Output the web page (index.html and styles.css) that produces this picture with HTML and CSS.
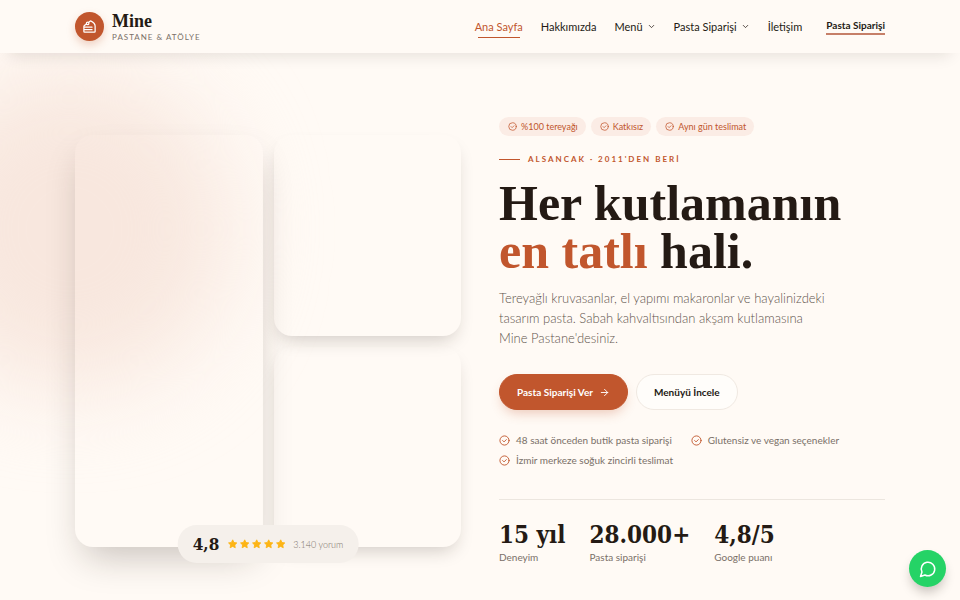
FILE: index.html
```html
<!DOCTYPE html>
<html lang="tr">
<head>
    <meta charset="utf-8">
    <meta name="viewport" content="width=device-width, initial-scale=1.0">
    <title>Mine Pastane &amp; Atölye</title>
    <link rel="stylesheet" href="styles.css">
</head>
<body>
    <svg class="sprite" aria-hidden="true">
        <symbol id="check" viewBox="0 0 24 24"><circle cx="12" cy="12" r="10"/><path d="m8 12 3 3 5-5"/></symbol>
        <symbol id="chevron" viewBox="0 0 24 24"><path d="m6 9 6 6 6-6"/></symbol>
        <symbol id="star" viewBox="0 0 24 24"><path d="M12 2l3.1 6.3 6.9 1-5 4.9 1.2 6.8-6.2-3.2L5.8 21 7 14.200 2 9.300l6.900-1z"/></symbol>
    </svg>

    <header class="header">
        <div class="container header-inner">
            <a href="#" class="logo">
                <span class="logo-icon">
                    <svg class="icon" viewBox="0 0 24 24"><path d="M16 13H3M16 17H3M7.200 7.900l-3.388 2.500A2 2 0 0 0 3 12.010V20a1 1 0 0 0 1 1h16a1 1 0 0 0 1-1v-8.654c0-2-2.440-6.026-6.440-8.026a1 1 0 0 0-1.082.057L10.400 5.600"/><circle cx="9" cy="7" r="2"/></svg>
                </span>
                <span class="logo-text">
                    <span class="logo-name">Mine</span>
                    <span class="logo-sub">PASTANE &amp; ATÖLYE</span>
                </span>
            </a>
            <nav class="nav">
                <a href="#" class="active">Ana Sayfa</a>
                <a href="#">Hakkımızda</a>
                <a href="#">Menü <svg class="icon"><use href="#chevron"/></svg></a>
                <a href="#">Pasta Siparişi <svg class="icon"><use href="#chevron"/></svg></a>
                <a href="#">İletişim</a>
                <a href="#" class="nav-cta">Pasta Siparişi</a>
            </nav>
        </div>
    </header>

    <main class="hero">
        <div class="glow"></div>
        <div class="container hero-grid">
            <div class="gallery">
                <div class="photo photo-tall"></div>
                <div class="photo"></div>
                <div class="photo"></div>
                <div class="rating">
                    <strong>4,8</strong>
                    <span class="stars">
                        <svg><use href="#star"/></svg>
                        <svg><use href="#star"/></svg>
                        <svg><use href="#star"/></svg>
                        <svg><use href="#star"/></svg>
                        <svg><use href="#star"/></svg>
                    </span>
                    <span class="rating-count">3.140 yorum</span>
                </div>
            </div>

            <div class="content">
                <ul class="tags">
                    <li><svg class="icon"><use href="#check"/></svg>%100 tereyağı</li>
                    <li><svg class="icon"><use href="#check"/></svg>Katkısız</li>
                    <li><svg class="icon"><use href="#check"/></svg>Aynı gün teslimat</li>
                </ul>
                <p class="eyebrow">ALSANCAK · 2011'DEN BERİ</p>
                <h1>Her kutlamanın<br><em>en tatlı</em> hali.</h1>
                <p class="lead">Tereyağlı kruvasanlar, el yapımı makaronlar ve hayalinizdeki<br>tasarım pasta. Sabah kahvaltısından akşam kutlamasına<br>Mine Pastane'desiniz.</p>
                <div class="buttons">
                    <button type="button" class="btn btn-primary">Pasta Siparişi Ver <svg class="icon" viewBox="0 0 24 24"><path d="M5 12h14M12 5l7 7-7 7"/></svg></button>
                    <button type="button" class="btn">Menüyü İncele</button>
                </div>
                <ul class="features">
                    <li><svg class="icon"><use href="#check"/></svg>48 saat önceden butik pasta siparişi</li>
                    <li><svg class="icon"><use href="#check"/></svg>Glutensiz ve vegan seçenekler</li>
                    <li><svg class="icon"><use href="#check"/></svg>İzmir merkeze soğuk zincirli teslimat</li>
                </ul>
                <dl class="stats">
                    <div><dd>15 yıl</dd><dt>Deneyim</dt></div>
                    <div><dd>28.000+</dd><dt>Pasta siparişi</dt></div>
                    <div><dd>4,8/5</dd><dt>Google puanı</dt></div>
                </dl>
            </div>
        </div>
    </main>

    <a href="#" class="whatsapp" aria-label="WhatsApp">
        <svg class="icon" viewBox="0 0 24 24"><path d="M7.900 20A9 9 0 1 0 4 16.100L2 22Z"/></svg>
    </a>
</body>
</html>
```

FILE: styles.css
```css
:root {
    --bg: #fffaf5;
    --ink: #241a14;
    --muted: #7a7068;
    --accent: #c1562d;
    --sans: Lato, "Liberation Sans", sans-serif;
    --serif: "Liberation Serif", "Times New Roman", serif;
    --figures: "DejaVu Serif Condensed", "DejaVu Serif", serif;
}
* {
    box-sizing: border-box;
}
body {
    margin: 0;
    background: var(--bg);
    color: var(--ink);
    font-family: var(--sans);
    font-size: 11px;
}
a {
    color: inherit;
    text-decoration: none;
}
ul, dl, dd, p, h1 {
    margin: 0;
    padding: 0;
    list-style: none;
}
.sprite {
    display: none;
}
.icon {
    flex: none;
    fill: none;
    stroke: currentColor;
    stroke-width: 2;
    stroke-linecap: round;
    stroke-linejoin: round;
}
.container {
    max-width: 960px;
    margin: 0 auto;
    padding: 0 75px;
}

/* header */
.header {
    position: relative;
    z-index: 2;
    background: var(--bg);
    box-shadow: 0 12px 16px -10px rgba(36, 26, 20, 0.12);
}
.header-inner {
    display: flex;
    align-items: center;
    justify-content: space-between;
    height: 53px;
}
.logo {
    display: flex;
    align-items: center;
    gap: 8px;
}
.logo-icon {
    display: flex;
    align-items: center;
    justify-content: center;
    width: 29px;
    height: 29px;
    border-radius: 50%;
    background: var(--accent);
    color: #fff;
    box-shadow: 0 4px 8px rgba(193, 86, 45, 0.25);
}
.logo-icon .icon {
    width: 15px;
    height: 15px;
}
.logo-text {
    display: flex;
    flex-direction: column;
    gap: 3px;
}
.logo-name {
    font: bold 18px/18px var(--serif);
}
.logo-sub {
    color: var(--muted);
    font-size: 8px;
    line-height: 8px;
    letter-spacing: 1px;
}
.nav {
    display: flex;
    align-items: center;
    gap: 18px;
}
.nav a {
    position: relative;
    display: flex;
    align-items: center;
    gap: 4px;
}
.nav .icon {
    width: 9px;
    height: 9px;
}
.nav .active {
    color: var(--accent);
}
.nav .active::after {
    content: "";
    position: absolute;
    left: 3px;
    right: 3px;
    bottom: -5px;
    height: 1px;
    background: var(--accent);
}
.nav .nav-cta {
    margin-left: 6px;
    padding-bottom: 2px;
    border-bottom: 2px solid #c67f68;
    font-size: 10px;
    font-weight: 700;
}

/* hero */
.hero {
    position: relative;
    overflow: hidden;
    padding: 64px 0 35px;
}
.glow {
    position: absolute;
    top: 16px;
    left: -90px;
    width: 320px;
    height: 320px;
    border-radius: 50%;
    background: #f8e7de;
    filter: blur(45px);
}
.hero-grid {
    position: relative;
    display: grid;
    grid-template-columns: 1fr 1fr;
    align-items: center;
    gap: 38px;
}
.gallery {
    position: relative;
    display: grid;
    grid-template-columns: 1fr 1fr;
    grid-template-rows: 1fr 1fr;
    gap: 11px;
    height: 412px;
}
.photo {
    border-radius: 18px;
    box-shadow: 0 9px 18px -6px rgba(36, 26, 20, 0.22);
}
.photo-tall {
    grid-row: span 2;
    box-shadow: 0 18px 36px -9px rgba(36, 26, 20, 0.25);
}
.rating {
    position: absolute;
    left: 50%;
    bottom: -16px;
    transform: translateX(-50%);
    display: flex;
    align-items: center;
    gap: 8px;
    height: 38px;
    padding: 0 15px;
    border-radius: 19px;
    background: #f5f0eb;
    white-space: nowrap;
}
.rating strong {
    font: bold 17px/20px var(--figures);
}
.stars {
    display: flex;
    gap: 2px;
}
.stars svg {
    width: 10px;
    height: 10px;
    fill: #fdb515;
    stroke: #fdb515;
    stroke-width: 2;
    stroke-linejoin: round;
}
.rating-count {
    color: var(--muted);
    font-size: 9px;
    font-weight: 300;
}

.tags {
    display: flex;
    gap: 5px;
}
.tags li {
    display: flex;
    align-items: center;
    gap: 4px;
    height: 19px;
    padding: 0 8px 0 9px;
    border-radius: 10px;
    background: #fbece5;
    color: var(--accent);
    font-size: 9px;
}
.tags .icon {
    width: 9px;
    height: 9px;
}
.eyebrow {
    display: flex;
    align-items: center;
    gap: 8px;
    margin-top: 17px;
    color: var(--accent);
    font-size: 8px;
    font-weight: 700;
    line-height: 12px;
    letter-spacing: 2px;
}
.eyebrow::before {
    content: "";
    width: 21px;
    height: 1px;
    background: var(--accent);
}
h1 {
    margin-top: 14px;
    font: bold 50px/48px var(--serif);
}
h1 em {
    color: var(--accent);
    font-style: normal;
}
.lead {
    margin-top: 13px;
    color: #5f554d;
    font-size: 13px;
    font-weight: 300;
    line-height: 20px;
}
.buttons {
    display: flex;
    gap: 8px;
    margin-top: 26px;
}
.btn {
    display: flex;
    align-items: center;
    gap: 6px;
    height: 36px;
    padding: 0 17px;
    border: 1px solid #f0e9e2;
    border-radius: 18px;
    background: #fffdfa;
    color: var(--ink);
    font: 700 10px var(--sans);
    cursor: pointer;
}
.btn-primary {
    border-color: var(--accent);
    background: var(--accent);
    color: #fff;
    box-shadow: 0 6px 12px -3px rgba(193, 86, 45, 0.3);
}
.btn .icon {
    width: 11px;
    height: 11px;
}
.features {
    display: flex;
    flex-wrap: wrap;
    gap: 4px 19px;
    margin-top: 22px;
    color: var(--muted);
    font-size: 10px;
    line-height: 16px;
}
.features li {
    display: flex;
    align-items: center;
    gap: 6px;
}
.features .icon {
    width: 11px;
    height: 11px;
    color: var(--accent);
}
.stats {
    display: flex;
    gap: 24px;
    margin-top: 31px;
    padding-top: 21px;
    border-top: 1px solid #ece6df;
}
.stats div {
    display: flex;
    flex-direction: column;
}
.stats dd {
    font: bold 24px/28px var(--figures);
}
.stats dt {
    order: 1;
    color: var(--muted);
    font-size: 10px;
    line-height: 16px;
}

.whatsapp {
    position: fixed;
    right: 14px;
    bottom: 13px;
    z-index: 3;
    display: flex;
    align-items: center;
    justify-content: center;
    width: 37px;
    height: 37px;
    border-radius: 50%;
    background: #25d366;
    color: #fff;
    box-shadow: 0 7px 11px -2px rgba(36, 26, 20, 0.25);
}
.whatsapp .icon {
    width: 18px;
    height: 18px;
}
```
